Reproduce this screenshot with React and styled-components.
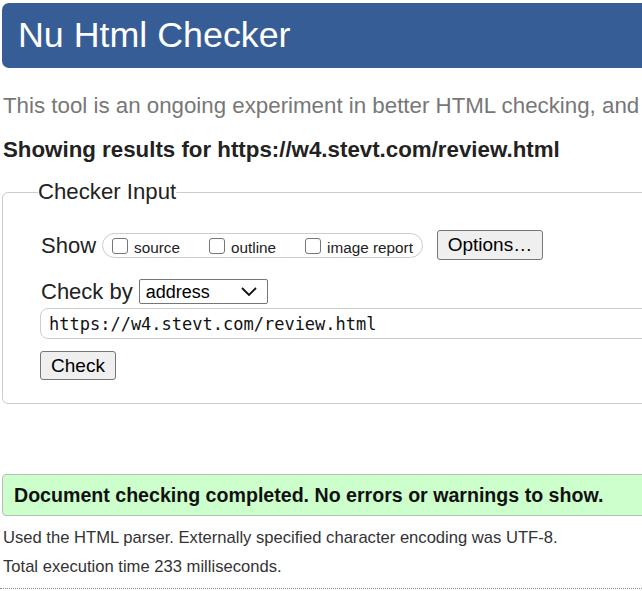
import styled, { createGlobalStyle } from "styled-components";

const GlobalStyle = createGlobalStyle`
    html, body {
        margin: 0;
        overflow: hidden;
        background: #fff;
    }
    body {
        font-family: "Liberation Sans", Arial, sans-serif;
        color: #222;
    }
`;

function Chevron() {
    return (
        <svg width="16" height="9" viewBox="0 0 16 9">
            <path d="M1 1 L8 8 L15 1" fill="none" stroke="#111" strokeWidth="1.8" />
        </svg>
    );
}

function ShowOption({ label }) {
    return (
        <OptionLabel>
            <Box type="checkbox" />
            <span>{label}</span>
        </OptionLabel>
    );
}

export default function App() {
    return (
        <>
            <GlobalStyle />
            <Page>
                <Header>
                    <h1>Nu Html Checker</h1>
                </Header>
                <Intro>This tool is an ongoing experiment in better HTML checking, and</Intro>
                <ResultsFor>Showing results for https://w4.stevt.com/review.html</ResultsFor>

                <Fieldset>
                    <Legend>Checker Input</Legend>
                    <ShowRow>
                        <RowLabel>Show</RowLabel>
                        <OptionGroup>
                            <ShowOption label="source" />
                            <ShowOption label="outline" />
                            <ShowOption label="image report" />
                        </OptionGroup>
                        <Button $w={106} $h={30}>Options…</Button>
                    </ShowRow>
                    <CheckByRow>
                        <RowLabel>Check by</RowLabel>
                        <SelectWrap>
                            <Select defaultValue="address">
                                <option value="address">address</option>
                                <option value="file">file upload</option>
                                <option value="text">text input</option>
                            </Select>
                            <ChevronSlot><Chevron /></ChevronSlot>
                        </SelectWrap>
                    </CheckByRow>
                    <UrlInput type="text" readOnly value="https://w4.stevt.com/review.html" />
                    <Button $w={76} $h={29} $top={12}>Check</Button>
                </Fieldset>

                <Success>Document checking completed. No errors or warnings to show.</Success>
                <Note $top={12}>Used the HTML parser. Externally specified character encoding was UTF-8.</Note>
                <Note $top={9}>Total execution time 233 milliseconds.</Note>
                <Rule />
            </Page>
        </>
    );
}

const Page = styled.div`
    width: 1100px;
    padding: 3px 0 0 2px;
`;

const Header = styled.header`
    display: flex;
    align-items: center;
    height: 65px;
    padding-left: 16px;
    background: #365d95;
    border-radius: 7px 0 0 7px;

    h1 {
        margin: 0;
        font-size: 35.8px;
        font-weight: normal;
        color: #fff;
    }
`;

const Intro = styled.p`
    margin: 26px 0 0 1px;
    font-size: 22.3px;
    line-height: 24px;
    color: #777;
    white-space: nowrap;
`;

const ResultsFor = styled.h2`
    margin: 20px 0 0 1px;
    font-size: 22.3px;
    line-height: 24px;
    font-weight: bold;
    color: #222;
`;

const Fieldset = styled.fieldset`
    margin: 18px 0 0 0;
    padding: 0 0 23px 37px;
    border: 1px solid #ccc;
    border-radius: 6px;
    min-inline-size: auto;
`;

const Legend = styled.legend`
    padding: 0;
    margin-left: -2px;
    font-size: 22.2px;
    line-height: 24px;
    color: #222;
`;

const ShowRow = styled.div`
    display: flex;
    align-items: center;
    margin-top: 26px;
    height: 30px;
`;

const CheckByRow = styled.div`
    display: flex;
    align-items: center;
    margin-top: 19px;
    height: 25px;
`;

const RowLabel = styled.span`
    margin-left: 1px;
    font-size: 22px;
    line-height: 25px;
    color: #222;
    margin-right: 6px;
`;

const OptionGroup = styled.div`
    display: flex;
    align-items: center;
    gap: 29px;
    height: 23px;
    padding: 0 9px;
    border: 1px solid #ccc;
    border-radius: 13px;
    margin-right: 14px;
`;

const OptionLabel = styled.label`
    display: flex;
    align-items: flex-end;
    gap: 6px;
    font-size: 15.3px;
    line-height: 18px;
    color: #222;

    span {
        transform: translateY(3px);
    }
`;

const Box = styled.input`
    appearance: none;
    margin: 0;
    width: 16px;
    height: 16px;
    border: 1.3px solid #767676;
    border-radius: 3px;
    background: #fff;
`;

const Button = styled.button`
    width: ${(p) => p.$w}px;
    height: ${(p) => p.$h}px;
    margin-top: ${(p) => p.$top || 0}px;
    padding: 0;
    font-family: "Liberation Sans", Arial, sans-serif;
    font-size: 19px;
    color: #000;
    background: #efefef;
    border: 1px solid #767676;
    border-radius: 3px;
    display: block;
`;

const SelectWrap = styled.div`
    position: relative;
    width: 129px;
    height: 25px;
`;

const Select = styled.select`
    appearance: none;
    width: 100%;
    height: 100%;
    margin: 0;
    padding: 0 0 0 6px;
    font-family: "Liberation Sans", Arial, sans-serif;
    font-size: 18px;
    color: #000;
    background: #fff;
    border: 1px solid #767676;
    border-radius: 2px;
`;

const ChevronSlot = styled.span`
    position: absolute;
    right: 11px;
    top: 8px;
    pointer-events: none;
    line-height: 0;
`;

const UrlInput = styled.input`
    display: block;
    box-sizing: border-box;
    width: 100%;
    height: 31px;
    margin: 4px 0 0 0;
    padding: 0 0 0 8px;
    font-family: "DejaVu Sans Mono", "Liberation Mono", monospace;
    font-size: 17px;
    color: #111;
    border: 1px solid #ccc;
    border-radius: 8px 0 0 8px;
    outline: none;
`;

const Success = styled.div`
    box-sizing: border-box;
    height: 42px;
    margin-top: 70px;
    padding-left: 11px;
    display: flex;
    align-items: center;
    font-size: 19.6px;
    font-weight: bold;
    color: #111;
    background: #ccffcc;
    border: 1px solid #bbb;
    border-radius: 4px;
`;

const Note = styled.p`
    margin: ${(p) => p.$top}px 0 0 1px;
    font-size: 16.6px;
    line-height: 20px;
    color: #333;
`;

const Rule = styled.hr`
    margin: 11px 0 0 -2px;
    border: 0;
    border-top: 1px dotted #888;
`;
